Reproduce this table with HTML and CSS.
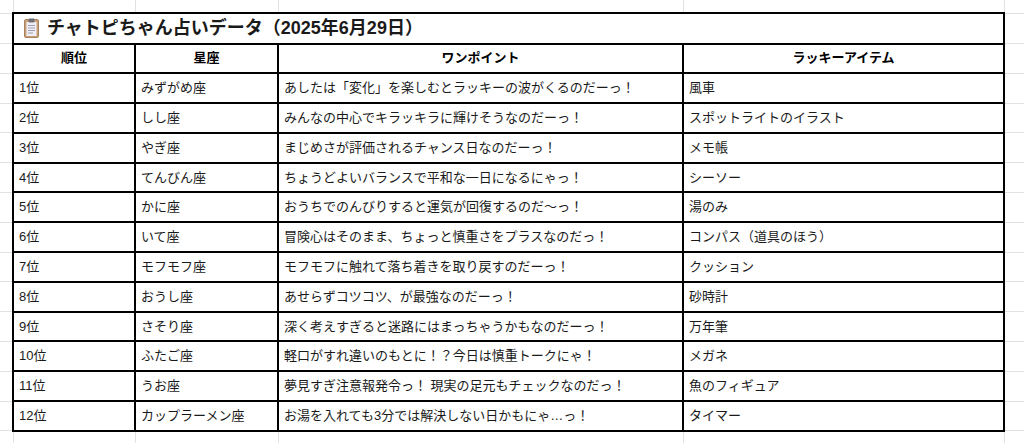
FILE: index.html
```html
<!DOCTYPE html>
<html lang="ja">
<head>
<meta charset="utf-8">
<title>チャトピちゃん占いデータ</title>
<link rel="stylesheet" href="styles.css">
</head>
<body>
<table class="sheet">
  <colgroup>
    <col class="c0"><col class="c1"><col class="c2"><col class="c3"><col class="c4"><col class="c5">
  </colgroup>
  <tr class="pad-top"><td class="edge-l"></td><td></td><td></td><td></td><td></td><td class="edge-r"></td></tr>
  <tr class="row title-row">
    <td class="edge-l"></td>
    <td class="b title" colspan="4"><span class="title-inner"><svg class="clip" width="15" height="20" viewBox="0 0 15 20" aria-hidden="true"><rect x="0.5" y="1.5" width="14" height="18" rx="1.5" fill="#c9a27c" stroke="#a8835e" stroke-width="1"/><rect x="2.5" y="4" width="10" height="14" fill="#f1eef6"/><rect x="4" y="7" width="7" height="1" fill="#9a9fb0"/><rect x="4" y="9.5" width="7" height="1" fill="#9a9fb0"/><rect x="4" y="12" width="7" height="1" fill="#9a9fb0"/><rect x="4" y="14.5" width="5" height="1" fill="#9a9fb0"/><rect x="4.5" y="0.5" width="6" height="4" rx="1" fill="#6f6f73"/></svg><span>チャトピちゃん占いデータ（2025年6月29日）</span></span></td>
    <td class="edge-r"></td>
  </tr>
  <tr class="row head">
    <td class="edge-l"></td>
    <td class="b">順位</td><td class="b">星座</td><td class="b">ワンポイント</td><td class="b">ラッキーアイテム</td>
    <td class="edge-r"></td>
  </tr>
  <tr class="row data"><td class="edge-l"></td><td class="b">1位</td><td class="b">みずがめ座</td><td class="b">あしたは「変化」を楽しむとラッキーの波がくるのだーっ！</td><td class="b">風車</td><td class="edge-r"></td></tr>
  <tr class="row data"><td class="edge-l"></td><td class="b">2位</td><td class="b">しし座</td><td class="b">みんなの中心でキラッキラに輝けそうなのだーっ！</td><td class="b">スポットライトのイラスト</td><td class="edge-r"></td></tr>
  <tr class="row data"><td class="edge-l"></td><td class="b">3位</td><td class="b">やぎ座</td><td class="b">まじめさが評価されるチャンス日なのだーっ！</td><td class="b">メモ帳</td><td class="edge-r"></td></tr>
  <tr class="row data"><td class="edge-l"></td><td class="b">4位</td><td class="b">てんびん座</td><td class="b">ちょうどよいバランスで平和な一日になるにゃっ！</td><td class="b">シーソー</td><td class="edge-r"></td></tr>
  <tr class="row data"><td class="edge-l"></td><td class="b">5位</td><td class="b">かに座</td><td class="b">おうちでのんびりすると運気が回復するのだ〜っ！</td><td class="b">湯のみ</td><td class="edge-r"></td></tr>
  <tr class="row data"><td class="edge-l"></td><td class="b">6位</td><td class="b">いて座</td><td class="b">冒険心はそのまま、ちょっと慎重さをプラスなのだっ！</td><td class="b">コンパス（道具のほう）</td><td class="edge-r"></td></tr>
  <tr class="row data"><td class="edge-l"></td><td class="b">7位</td><td class="b">モフモフ座</td><td class="b">モフモフに触れて落ち着きを取り戻すのだーっ！</td><td class="b">クッション</td><td class="edge-r"></td></tr>
  <tr class="row data"><td class="edge-l"></td><td class="b">8位</td><td class="b">おうし座</td><td class="b">あせらずコツコツ、が最強なのだーっ！</td><td class="b">砂時計</td><td class="edge-r"></td></tr>
  <tr class="row data"><td class="edge-l"></td><td class="b">9位</td><td class="b">さそり座</td><td class="b">深く考えすぎると迷路にはまっちゃうかもなのだーっ！</td><td class="b">万年筆</td><td class="edge-r"></td></tr>
  <tr class="row data"><td class="edge-l"></td><td class="b">10位</td><td class="b">ふたご座</td><td class="b">軽口がすれ違いのもとに！？今日は慎重トークにゃ！</td><td class="b">メガネ</td><td class="edge-r"></td></tr>
  <tr class="row data"><td class="edge-l"></td><td class="b">11位</td><td class="b">うお座</td><td class="b">夢見すぎ注意報発令っ！ 現実の足元もチェックなのだっ！</td><td class="b">魚のフィギュア</td><td class="edge-r"></td></tr>
  <tr class="row data"><td class="edge-l"></td><td class="b">12位</td><td class="b">カップラーメン座</td><td class="b">お湯を入れても3分では解決しない日かもにゃ…っ！</td><td class="b">タイマー</td><td class="edge-r"></td></tr>
  <tr class="pad-bottom"><td class="edge-l"></td><td></td><td></td><td></td><td></td><td class="edge-r"></td></tr>
</table>
</body>
</html>
```

FILE: styles.css
```css
html, body {
  margin: 0;
  padding: 0;
  background: #ffffff;
  overflow: hidden;
}

body {
  font-family: "Liberation Sans", "Noto Sans CJK JP", sans-serif;
  font-size: 13px;
  color: #000000;
}

.sheet {
  border-collapse: collapse;
  table-layout: fixed;
  width: 1024px;
}

.c0 { width: 13px; }
.c1 { width: 122px; }
.c2 { width: 143px; }
.c3 { width: 405px; }
.c4 { width: 321px; }

.sheet td {
  border: 1px solid #e2e2e2;
  padding: 0 5px;
  white-space: nowrap;
  overflow: hidden;
  vertical-align: middle;
  line-height: 16px;
}

.sheet .edge-l { border-left: none; padding: 0; }
.sheet .edge-r { border-right: none; padding: 0; }
.pad-top td { border-top: none; height: 12px; padding: 0; }
.pad-top { height: 13px; }

.row { height: 29.8px; }
.title-row { height: 30.5px; }
.pad-bottom { height: 12px; }
.pad-bottom td { border-bottom: none; }

.sheet td.b {
  border: 2px solid #000000;
  color: #1a1a1a;
}

.title {
  font-size: 18px;
  font-weight: bold;
  color: #000000;
}

.title-inner {
  display: flex;
  align-items: center;
  gap: 8px;
  padding-left: 5px;
}

.clip {
  flex: none;
}

.head td.b {
  font-weight: bold;
  text-align: center;
  color: #000000;
}
```
